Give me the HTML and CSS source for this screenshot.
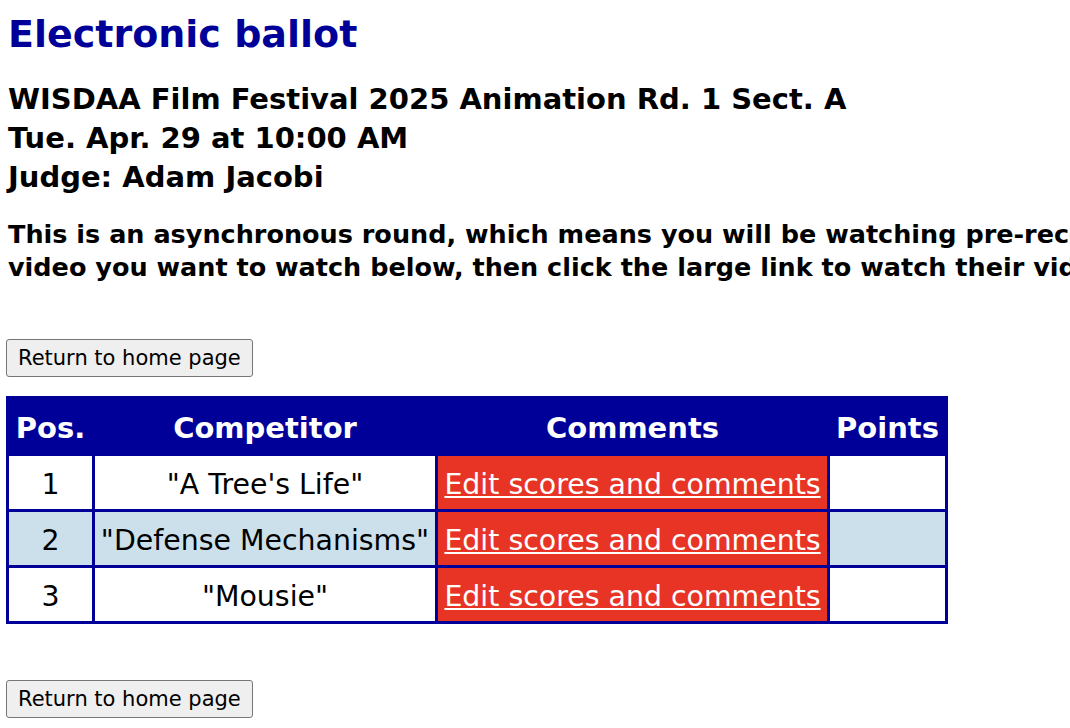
FILE: index.html
```html
<!DOCTYPE html>
<html lang="en">
<head>
<meta charset="utf-8">
<title>Electronic ballot</title>
<link rel="stylesheet" href="styles.css">
</head>
<body>
<h1 class="title">Electronic ballot</h1>
<h2 class="info">WISDAA Film Festival 2025 Animation Rd. 1 Sect. A<br>Tue. Apr. 29 at 10:00 AM<br>Judge: Adam Jacobi</h2>
<p class="note">This is an asynchronous round, which means you will be watching pre-recorded videos. Click the competitor whose<br>video you want to watch below, then click the large link to watch their video.</p>
<div class="actions"><button class="home-btn" type="button">Return to home page</button></div>
<table class="ballot">
  <thead>
    <tr><th class="c-pos">Pos.</th><th class="c-comp">Competitor</th><th class="c-comm">Comments</th><th class="c-pts">Points</th></tr>
  </thead>
  <tbody>
    <tr><td>1</td><td>"A Tree's Life"</td><td class="edit"><a href="#">Edit scores and comments</a></td><td></td></tr>
    <tr class="alt"><td>2</td><td>"Defense Mechanisms"</td><td class="edit"><a href="#">Edit scores and comments</a></td><td></td></tr>
    <tr><td>3</td><td>"Mousie"</td><td class="edit"><a href="#">Edit scores and comments</a></td><td></td></tr>
  </tbody>
</table>
<div class="actions bottom"><button class="home-btn" type="button">Return to home page</button></div>
</body>
</html>
```
FILE: styles.css
```css
html { overflow: hidden; }
body {
  margin: 0 6px;
  font-family: "DejaVu Sans", Verdana, sans-serif;
  color: #000;
  background: #fff;
  width: 1500px;
}
.title {
  color: #000099;
  font-size: 38px;
  font-weight: bold;
  margin: 10px 0 0 2px;
  line-height: 48px;
}
.info {
  font-size: 29px;
  line-height: 39px;
  margin: 22px 0 0 2px;
}
.note {
  font-size: 25.5px;
  font-weight: bold;
  line-height: 33px;
  margin: 21px 0 0 2px;
  white-space: nowrap;
}
.actions { display: flex; margin-top: 55px; }
.actions.bottom { margin-top: 56px; }
.home-btn {
  font-family: inherit;
  font-size: 21px;
  line-height: 26px;
  padding: 5px 11px;
  background: #efefef;
  border: 1px solid #767676;
  border-radius: 3px;
  color: #000;
}
.ballot {
  margin-top: 19px;
  border-collapse: separate;
  border-spacing: 3px;
  background: #000099;
  font-size: 28.4px;
  table-layout: fixed;
}
.ballot th {
  color: #fff;
  font-weight: bold;
  font-size: 29px;
  padding: 3px 0 0;
  height: 51px;
}
.ballot td {
  background: #fff;
  text-align: center;
  padding: 3px 0 0;
  height: 50px;
}
.ballot tr.alt td { background: #cbe0eb; }
.ballot td.edit, .ballot tr.alt td.edit { background: #e83425; }
.ballot td.edit a { color: #fff; }
.c-pos { width: 83px; }
.c-comp { width: 340px; }
.c-comm { width: 389px; }
.c-pts { width: 115px; }
```
